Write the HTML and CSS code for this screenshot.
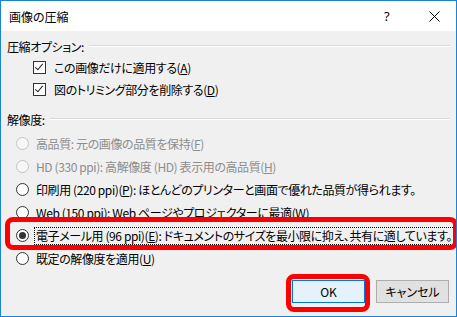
FILE: index.html
```html
<!DOCTYPE html>
<html>
  <head>
    <title>画像の圧縮</title>
    <link rel="stylesheet" href="styles.css">
  </head>
  <body>
    <div class="dialog">
      <div class="titlebar">
        <span class="title">画像の圧縮</span>
        <span class="help">?</span>
        <span class="close">
          <svg width="11" height="11" viewBox="0 0 11 11"><path d="M0.5 0.5 L10.5 10.5 M10.5 0.5 L0.5 10.5" stroke="#000" stroke-width="1" fill="none"/></svg>
        </span>
      </div>
      <div class="content">
        <div class="group-title"><span>圧縮オプション:</span><i class="rule"></i></div>
        <div class="check-row"><span class="checkbox checked"></span><span>この画像だけに適用する(<u>A</u>)</span></div>
        <div class="check-row"><span class="checkbox checked"></span><span>図のトリミング部分を削除する(<u>D</u>)</span></div>

        <div class="group-title second"><span>解像度:</span><i class="rule"></i></div>
        <div class="radio-row disabled"><span class="radio"></span><span>高品質: 元の画像の品質を保持(<u>F</u>)</span></div>
        <div class="radio-row disabled"><span class="radio"></span><span>HD (330 ppi): 高解像度 (HD) 表示用の高品質(<u>H</u>)</span></div>
        <div class="radio-row"><span class="radio"></span><span>印刷用 (220 ppi)(<u>P</u>): ほとんどのプリンターと画面で優れた品質が得られます。</span></div>
        <div class="radio-row"><span class="radio"></span><span>Web (150 ppi): Web ページやプロジェクターに最適(<u>W</u>)</span></div>
        <div class="radio-row highlight"><span class="radio selected"></span><span class="focus">電子メール用 (96 ppi)(<u>E</u>): ドキュメントのサイズを最小限に抑え、共有に適しています。</span></div>
        <div class="radio-row"><span class="radio"></span><span>既定の解像度を適用(<u>U</u>)</span></div>

        <div class="actions">
          <button class="btn default">OK</button>
          <button class="btn">キャンセル</button>
        </div>
      </div>
    </div>
  </body>
</html>
```

FILE: styles.css
```css
html, body {
  margin: 0;
  padding: 0;
}
body {
  font-family: "Noto Sans CJK JP", "Noto Sans", sans-serif;
  font-size: 12px;
  font-feature-settings: "palt";
  letter-spacing: -0.4px;
  color: #000;
}
.dialog {
  box-sizing: border-box;
  width: 457px;
  height: 317px;
  border: 1px solid #1883d7;
  background-color: #f0f0f0;
  display: flex;
  flex-direction: column;
  overflow: hidden;
}
.titlebar {
  height: 30px;
  background-color: #fff;
  display: flex;
  align-items: center;
  padding-left: 8px;
}
.title {
  flex: 1;
  letter-spacing: 0;
}
.help {
  width: 12px;
  margin-right: 33px;
  font-family: "Noto Sans", sans-serif;
  font-size: 13px;
}
.close {
  display: flex;
  margin-right: 16px;
}
.content {
  padding: 5px 6px 0 6px;
  display: flex;
  flex-direction: column;
  white-space: nowrap;
}
.group-title {
  height: 20px;
  display: flex;
  align-items: center;
}
.group-title.second {
  margin-top: 9px;
}
.group-title .rule {
  flex: 1;
  margin-left: 5px;
  border-top: 1px solid #d8d8d8;
  border-bottom: 1px solid #fff;
}
.check-row {
  height: 22px;
  display: flex;
  align-items: center;
  padding-left: 26px;
  gap: 8px;
}
.check-row:first-of-type {
  margin-top: 3px;
}
.checkbox {
  box-sizing: border-box;
  width: 13px;
  height: 13px;
  border: 1px solid #333;
  background-color: #fff;
  position: relative;
}
.checkbox.checked::after {
  content: "";
  position: absolute;
  left: 3px;
  top: 0px;
  width: 3px;
  height: 7px;
  border-right: 1px solid #222;
  border-bottom: 1px solid #222;
  transform: rotate(40deg);
}
.radio-row {
  height: 23px;
  display: flex;
  align-items: center;
  padding-left: 9px;
  gap: 7px;
  position: relative;
}
.group-title.second + .radio-row {
  margin-top: 3px;
}
.radio {
  box-sizing: border-box;
  width: 13px;
  height: 13px;
  border: 1px solid #333;
  border-radius: 50%;
  background-color: #fff;
  display: flex;
  align-items: center;
  justify-content: center;
  flex: none;
}
.radio.selected::after {
  content: "";
  width: 7px;
  height: 7px;
  border-radius: 50%;
  background-color: #333;
}
.radio-row.disabled {
  color: #8d8d8d;
}
.radio-row.disabled .radio {
  border-color: #c4c4c4;
  background-color: #f7f7f7;
}
.focus {
  border: 1px dotted #000;
  padding: 0 4px 0 1px;
  margin-left: -2px;
  line-height: 16px;
}
.highlight::after,
.btn.default::after {
  content: "";
  position: absolute;
  border: 5px solid #ff0000;
  border-radius: 8px;
  pointer-events: none;
}
.highlight::after {
  left: -2px;
  right: -8px;
  top: -7px;
  bottom: -3px;
}
.actions {
  margin-top: 10px;
  display: flex;
  justify-content: flex-end;
  gap: 11px;
  padding-right: 1px;
}
.btn {
  box-sizing: border-box;
  width: 73px;
  height: 23px;
  font-family: "Noto Sans CJK JP", "Noto Sans", sans-serif;
  font-size: 12px;
  font-feature-settings: "palt";
  background-color: #e1e1e1;
  border: 1px solid #adadad;
  padding: 0;
  position: relative;
}
.btn.default {
  background-color: #e5f1fb;
  border: 1px solid #0078d7;
}
.btn.default::after {
  left: -7px;
  right: -6px;
  top: -7px;
  bottom: -10px;
}
```
